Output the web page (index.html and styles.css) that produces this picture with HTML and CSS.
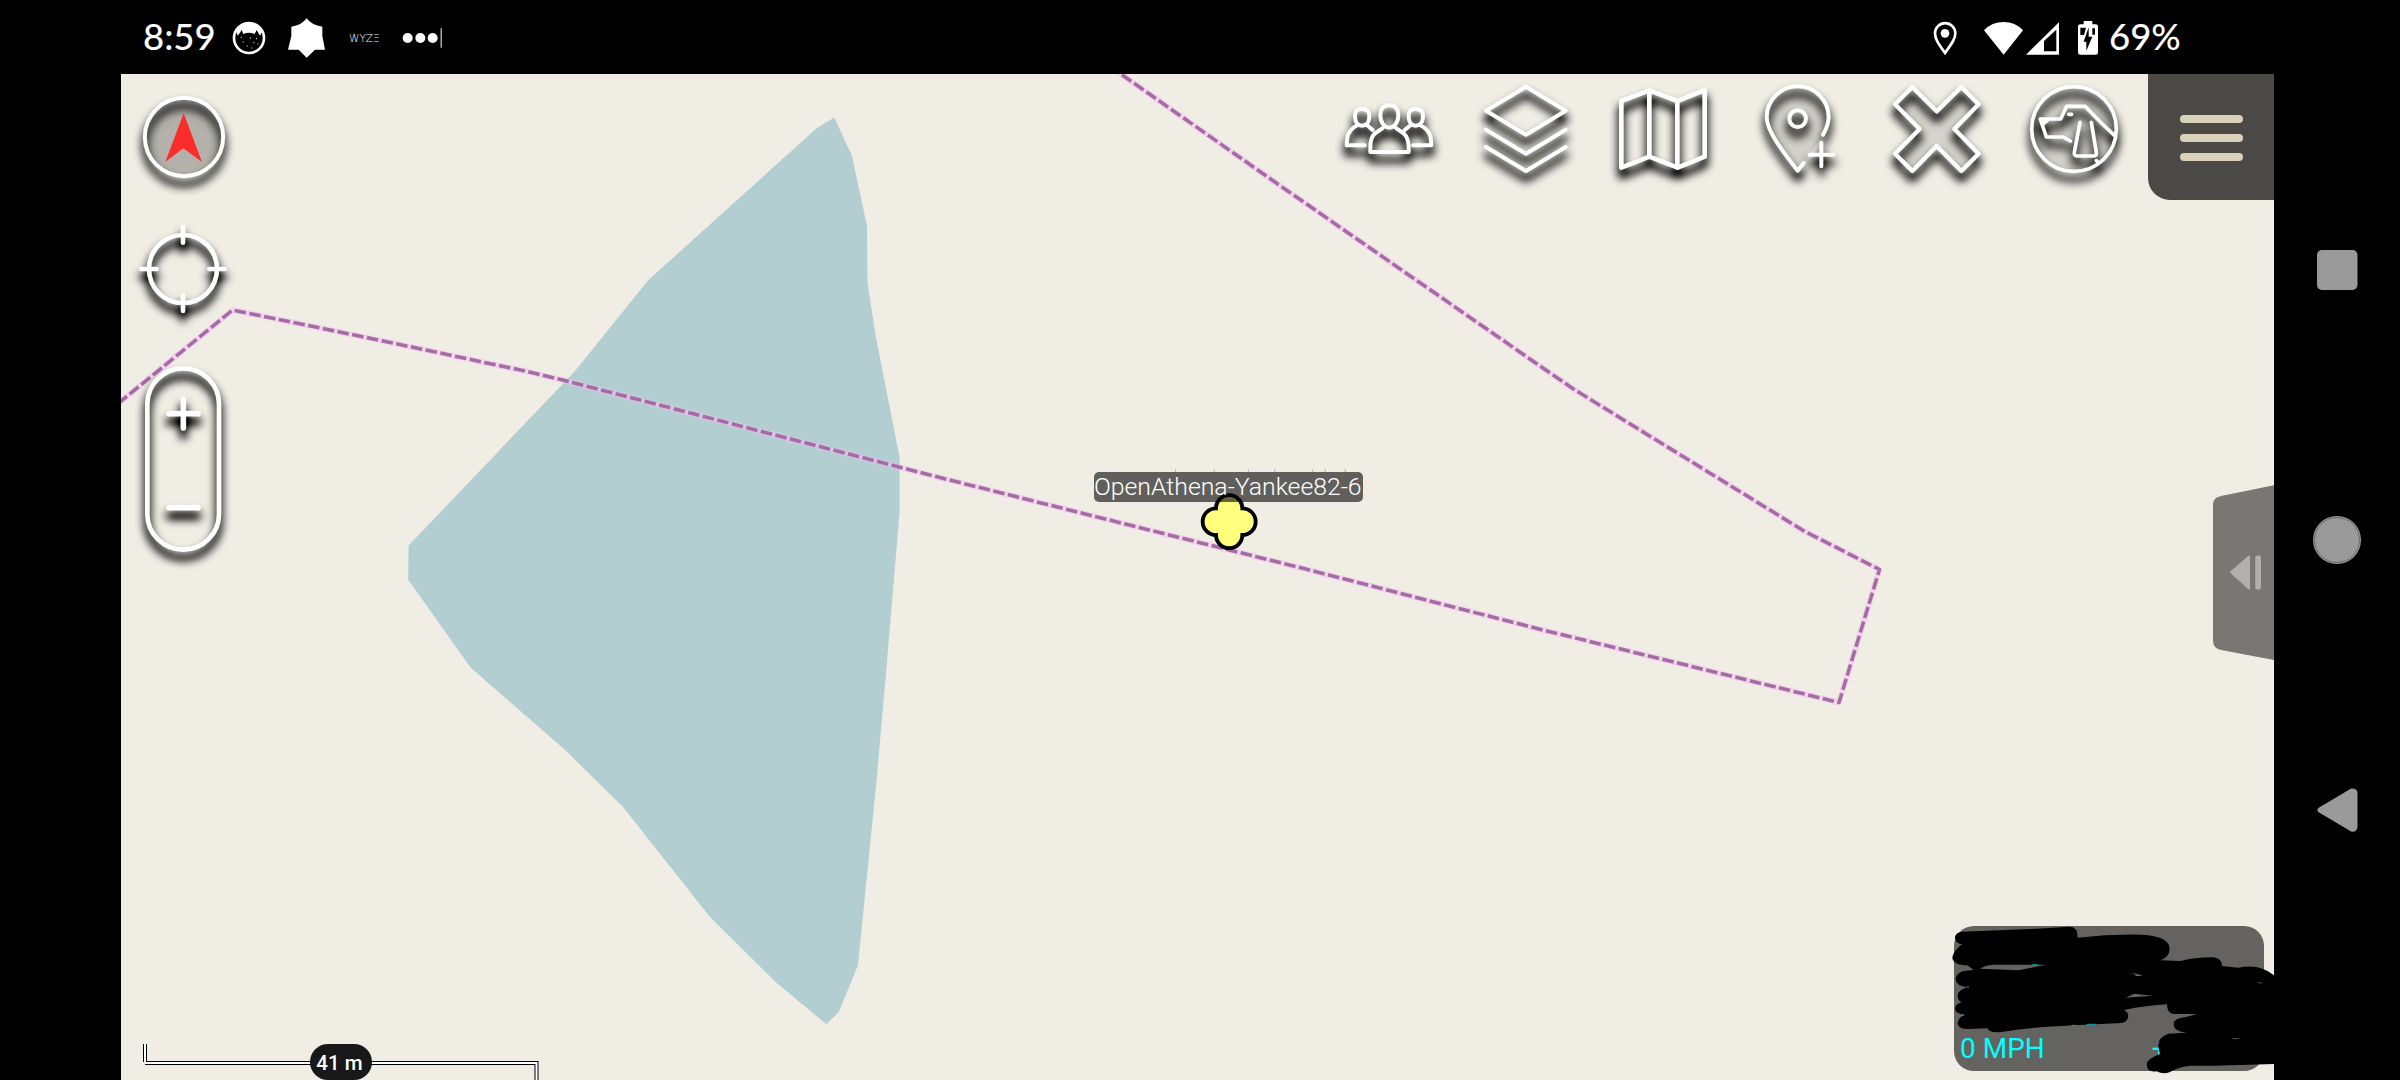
FILE: index.html
```html
<!DOCTYPE html>
<html lang="en">
<head>
<meta charset="utf-8">
<title>Map</title>
<link rel="stylesheet" href="styles.css">
</head>
<body>
<svg class="defs" width="0" height="0"><filter id="soft" filterUnits="userSpaceOnUse" x="-100" y="-60" width="1500" height="1400" color-interpolation-filters="sRGB"><feGaussianBlur in="SourceAlpha" stdDeviation="14.500"/><feOffset dy="23"/><feColorMatrix values="0 0 0 0 0  0 0 0 0 0  0 0 0 0 0  0 0 0 1.550 0" result="b"/><feMerge><feMergeNode in="b"/><feMergeNode in="SourceGraphic"/></feMerge></filter></svg>
<div class="screen">
  <main class="app">
    <header class="status">
      <div class="status-side">
        <span class="clock">8:59</span>
        <svg class="st-cat" viewBox="336 65 102 102"><circle cx="387" cy="116" r="45" fill="#000" stroke="#fff" stroke-width="8"/><path d="M345 92Q362 70 387 69Q412 70 429 92L420 109L410 92L404 104Q386 97 370 104L365 92L354 109Z" fill="#fff"/><path d="M368 128h3M390 116h3M400 130h3M380 140h3M408 118h3M362 114h3M394 146h3M412 134h3" stroke="#fff" stroke-width="3"/></svg>
        <svg class="st-star" viewBox="504 58 111 120"><path d="M560 59Q575 80 607 84V112L615 153H585L560 177L536 153H504L514 112V84Q545 80 560 59Z" fill="#fff"/></svg>
        <span class="wyze">WYZΞ</span>
        <svg class="st-dots" viewBox="846 80 126 72"><g fill="#fff"><circle cx="863" cy="116" r="15"/><circle cx="901" cy="116" r="15"/><circle cx="938" cy="116" r="15"/><path d="M962 87h3v58h-3z"/></g></svg>
      </div>
      <div class="status-side">
        <svg class="st-loc" viewBox="99 63 72 102"><path d="M135 159C116 132 105 117 105 100A30 30 0 0 1 166 100C166 117 154 132 135 159Z" fill="none" stroke="#fff" stroke-width="8"/><circle cx="135" cy="100" r="13" fill="#fff"/></svg>
        <svg class="st-net" viewBox="249 60 231 105"><path d="M252 88Q275 63 311 63Q346 63 369 88L311 161Z" fill="#fff"/><path d="M378 161L477 64V161Z" fill="#fff"/><path d="M432 120L469 86V151H432Z" fill="#000"/></svg>
        <svg class="st-bat" viewBox="531 57 66 108"><path d="M551 60h26v10h10q7 0 7 7v78q0 6-7 6h-46q-7 0-7-6V77q0-7 7-7h10z" fill="#fff"/><path d="M541 80h17l-6 22h-11zM577 82h8v19h-8zM566 79v28h11l-18 42v-27h-8z" fill="#000"/></svg>
        <span class="pct">69%</span>
      </div>
    </header>

    <section class="map">
      <svg class="base" viewBox="121 74 2153 1006">
        <path class="lake" d="M834.3 117.5L852 156L867 226L867.5 283L875.7 336L899.5 457V512.5L886.4 668.6L876.4 782L857.9 965.5L839 1011.5L826.4 1024.3L776.4 982.7L710 917L623 807L564 749L470.500 667.500L408.2 579.8L408.6 545.5L574.6 371.6L648.6 279.8L816.4 128.6Z"/>
        <path class="halo" d="M118 403.500L232.700 310L380.400 340.400L525 371L565.700 380.800L940 477.600L1080 512.700L1306.700 569.300L1540 629.300L1839 702.500L1879.500 569.500L1804 531L1575 390L1540 366L1276.700 183.300L1118 72"/>
        <path class="track" d="M118 403.500L232.700 310L380.400 340.400L525 371L565.700 380.800L940 477.600L1080 512.700L1306.700 569.300L1540 629.300L1839 702.500L1879.500 569.500L1804 531L1575 390L1540 366L1276.700 183.300L1118 72"/>
        <g transform="translate(1080 450) scale(.33333)"><path d="M408 175A39.500 39.500 0 0 1 487 175A40 40 0 0 1 487 255A39.500 39.500 0 0 1 408 255A40 40 0 0 1 408 175Z" fill="#ffff7d" stroke="#000" stroke-width="11.500"/><path d="M287 57v9M403 57v9M505 57v9M584 57v9M698 57v9M736 57v9M796 57v9" stroke="#9a9790" stroke-width="2"/></g>
      </svg>
      <div class="marker-label">OpenAthena-Yankee82-6</div>

      <div class="left-tools">
        <svg class="tool compass" viewBox="3 222 411 420"><circle cx="192" cy="411" r="118" fill="#000" opacity=".25"/><g class="sh"><circle cx="192" cy="411" r="117.500" stroke-width="12"/></g><path d="M191 340L246 486L190 445L136 486Z" fill="#fa2d2d" stroke="none"/></svg>
        <svg class="tool" viewBox="3 42 411 420"><g class="sh"><circle cx="189" cy="207" r="102" stroke-width="14"/><path stroke-width="14" d="M189 81v47M189 286v47M64 207h46M268 207h46"/></g></svg>
        <svg class="tool zoomer" viewBox="3 462 411 720"><g class="sh"><rect x="82" y="505" width="215" height="544" rx="107" stroke-width="14"/><path stroke-width="17" d="M190 597v87M147 641h87M147 923h87"/></g></svg>
      </div>

      <div class="top-tools">
        <svg viewBox="0 42 411 378"><g class="sh"><path d="M126 147C108 147 104 157 105 172C106 187 114 197 126 197S147 187 148 172C149 157 144 147 126 147ZM287 147C269 147 265 157 266 172C267 187 275 197 287 197S308 187 309 172C310 157 305 147 287 147ZM208 136C188 136 181 148 181 166C181 187 193 203 208 203S235 187 235 166C235 148 228 136 208 136ZM113 195Q82 210 81 240L80 256H134M140 194L158 210M300 195Q332 210 333 240L334 256H279M273 194L254 210M187 205L164 221Q152 232 151 258V276H266V258Q264 232 252 221L229 205"/></g></svg>
        <svg viewBox="411 42 411 378"><g class="sh"><path d="M618 80L737 152L618 224L498 152ZM498 209L618 281L737 209M498 261L618 333L737 261"/></g></svg>
        <svg viewBox="822 42 411 378"><g class="sh"><path stroke-width="14" d="M904 123L988 91L1072 123L1154 90V290L1073 323L988 290L904 323ZM988 91V290M1072 123V323"/></g></svg>
        <svg viewBox="33 42 411 378"><path d="M309 224Q325 197 326 172A93 93 0 0 0 140 172C140 210 180 264 233 332L300 240Z" fill="#000" opacity=".12"/><g class="sh"><path d="M309 224Q325 197 326 172A93 93 0 0 0 140 172C140 210 180 264 233 332L251 309M304 248V319M269 284H340"/><circle cx="233" cy="176" r="25"/></g></svg>
        <svg viewBox="444 42 411 378"><path d="M577 81L650 154L724 81L776 133L703 207L776 281L724 333L650 258L577 333L525 281L599 207L525 133Z" fill="#000" opacity=".1"/><g class="sh"><path stroke-width="13" d="M577 81L650 154L724 81L776 133L703 207L776 281L724 333L650 258L577 333L525 281L599 207L525 133Z"/></g></svg>
        <svg viewBox="855 42 411 378"><circle cx="1062" cy="207" r="126" fill="#000" opacity=".12"/><g class="sh"><circle cx="1062" cy="207" r="127" stroke-width="11"/><path stroke-width="11" d="M961 177H1022L1040 139H1095L1147 192L1184 227M961 177L979 231H1029L1051 243M968 193L983 180M1046 163h9M1080 187L1063 277Q1062 288 1072 288H1121Q1130 288 1129 277L1114 187M1129 302l4 4"/></g></svg>
        <button class="menu" aria-label="Menu"><i></i><i></i><i></i></button>
      </div>

      <svg class="drawer-tab" viewBox="2213 485 61 176"><path d="M2274 485.300V660L2221 650Q2213 648 2213 641V504Q2213 498 2221 496Z" fill="#787774"/><path d="M2231 572.300L2249 556.500V588.500Z" fill="#b1b0ad" stroke="#b1b0ad" stroke-width="2" stroke-linejoin="round"/><rect x="2255.300" y="555.500" width="5.700" height="34" rx="2" fill="#b1b0ad"/></svg>

      <div class="scale"><svg viewBox="143 1044 396 36"><g fill="none"><path d="M145 1044V1062M145 1063H536.500V1080" stroke="#000" stroke-width="4"/><path d="M145 1044V1062M145 1063H536.500V1080" stroke="#fff" stroke-width="2"/></g></svg><span class="pill">41 m</span></div>

      <div class="gps">
        <span>0 MPH</span><span class="plus">+</span>
        <svg class="scribble" viewBox="66 72 966 450"><path d="M95 95L300 87L420 80Q443 80 443 113Q540 102 635 104Q719 108 719 148Q717 174 690 181L752 183Q800 171 850 172Q876 176 876 198L925 203Q990 190 1032 226V492L850 497H780Q740 502 720 516Q700 525 680 514Q650 518 650 493Q652 476 690 462L684 437Q685 412 715 401L770 398Q732 394 731 374Q731 354 765 352L801 342H730Q711 340 711 313Q650 316 582 330Q597 338 594 352Q592 366 575 369L430 376Q290 383 230 394Q180 403 172 385L110 387Q82 386 83 368Q86 352 104 345Q75 340 75 325Q77 312 95 307Q83 302 83 286Q85 270 112 262Q78 258 77 238Q78 220 100 213L130 210L113 196Q68 196 67 172Q71 152 96 133Q74 130 75 111Q77 98 95 95Z"/><g fill="#65635f"><path d="M150 206Q165 196 190 194H350L265 211ZM588 293L612 281L668 287ZM603 220Q617 227 636 227Q620 220 603 220ZM981 247Q990 243 998 252ZM902 415H934L915 418Z"/></g><path d="M307 194h16M110 261h7M95 345h8M425 376h14M470 373h28M616 226h18" stroke="#0aa" stroke-width="3"/></svg>
      </div>
    </section>
  </main>
  <nav class="navbar">
    <svg viewBox="0 0 48 48"><rect x="4" y="4" width="40.500" height="40" rx="5"/></svg>
    <svg viewBox="0 0 48 48"><circle cx="24" cy="24" r="24"/><circle cx="24" cy="24" r="22.500" fill="none" stroke="#6b6b6b" stroke-width="1"/></svg>
    <svg viewBox="0 0 48 48"><path d="M7 23L39 4Q42 4 42 6V40Q42 42.500 39 42.200Z" stroke="#9a9a9a" stroke-width="5" stroke-linejoin="round"/></svg>
  </nav>
</div>
</body>
</html>
```
FILE: styles.css
```css
body { margin: 0; background: #000; }
svg { display: block; flex: none; }
.defs { position: absolute; }
.screen { display: flex; width: 2400px; height: 1080px; padding-left: 121px; box-sizing: border-box; background: #000; overflow: hidden; }
.app { width: 2153px; display: flex; flex-direction: column; }

.status { height: 74px; display: flex; justify-content: space-between; padding: 0 92px 0 22px; color: #fff; }
.status-side { display: flex; align-items: center; height: 76px; }
.clock, .pct { font: 500 36.500px/72px Lato, sans-serif; white-space: nowrap; height: 76px; }
.clock { width: 89px; }
.pct { width: 73px; margin-left: 10px; }
.st-cat { width: 34px; }
.st-star { width: 37px; margin-left: 22px; }
.wyze { width: 52px; margin-left: 24px; font: 300 10.500px/12px "DejaVu Sans", sans-serif; }
.st-dots { width: 42px; margin-left: 1px; }
.st-loc { width: 24px; }
.st-net { width: 77px; margin-left: 26px; }
.st-bat { width: 22px; margin-left: 17px; }

.map { flex: 1; position: relative; overflow: hidden; background: #f0ede5; display: flex; justify-content: space-between; align-items: flex-start; }
.base { position: absolute; inset: 0; width: 2153px; height: 1006px; }
.lake { fill: #b3ced0; }
.halo, .track { fill: none; stroke-linejoin: round; }
.halo { stroke: rgba(244, 190, 240, .5); stroke-width: 6; }
.track { stroke: #a46ba4; stroke-width: 3.6; stroke-dasharray: 11.500 3.500; }

.marker-label { position: absolute; left: 973px; top: 398px; width: 269px; height: 30px; box-sizing: border-box; padding-right: 3px; border-radius: 5px; background: rgba(0, 0, 0, .6); color: #fff; font: 300 24.800px/29px Roboto, sans-serif; text-align: center; white-space: nowrap; }

.left-tools { position: relative; width: 137px; display: flex; flex-direction: column; }
.tool { width: 137px; height: 140px; }
.zoomer { height: 240px; }
.sh { fill: none; stroke: #fff; stroke-width: 12; stroke-linecap: round; stroke-linejoin: round; filter: url(#soft); }

.top-tools { position: relative; display: flex; align-items: flex-start; }
.top-tools svg { width: 137px; height: 126px; overflow: visible; }
.menu { width: 126px; height: 126px; margin-left: 6px; padding: 2px 0 0; border: 0; border-radius: 0 0 0 22px; background: #4a4946; display: flex; flex-direction: column; align-items: center; justify-content: center; gap: 10.500px; }
.menu i { width: 63px; height: 8.500px; border-radius: 4px; background: #d9d1b9; }

.drawer-tab { position: absolute; right: 0; top: 411px; width: 61px; height: 176px; }

.scale { position: absolute; left: 22px; bottom: 0; width: 396px; height: 36px; display: flex; justify-content: center; }
.scale svg { position: absolute; inset: 0; width: 396px; height: 36px; }
.pill { position: relative; width: 62px; height: 36px; box-sizing: border-box; padding-right: 3px; border-radius: 18px; background: #181818; color: #fff; font: 500 20.500px/39px Roboto, sans-serif; text-align: center; }

.gps { position: absolute; right: 10px; bottom: 9px; width: 310px; height: 145px; box-sizing: border-box; padding: 0 6px 7px; border-radius: 20px; background: #65635f; color: #0ff; display: flex; align-items: flex-end; font: 400 28px/30px Roboto, sans-serif; }
.plus { margin-left: 107px; }
.scribble { position: absolute; left: -2px; top: -2px; width: 322px; height: 150px; }

.navbar { width: 126px; box-sizing: border-box; padding: 245.500px 0; display: flex; flex-direction: column; align-items: center; justify-content: space-between; }
.navbar svg { width: 48px; height: 48px; fill: #9a9a9a; }
```
